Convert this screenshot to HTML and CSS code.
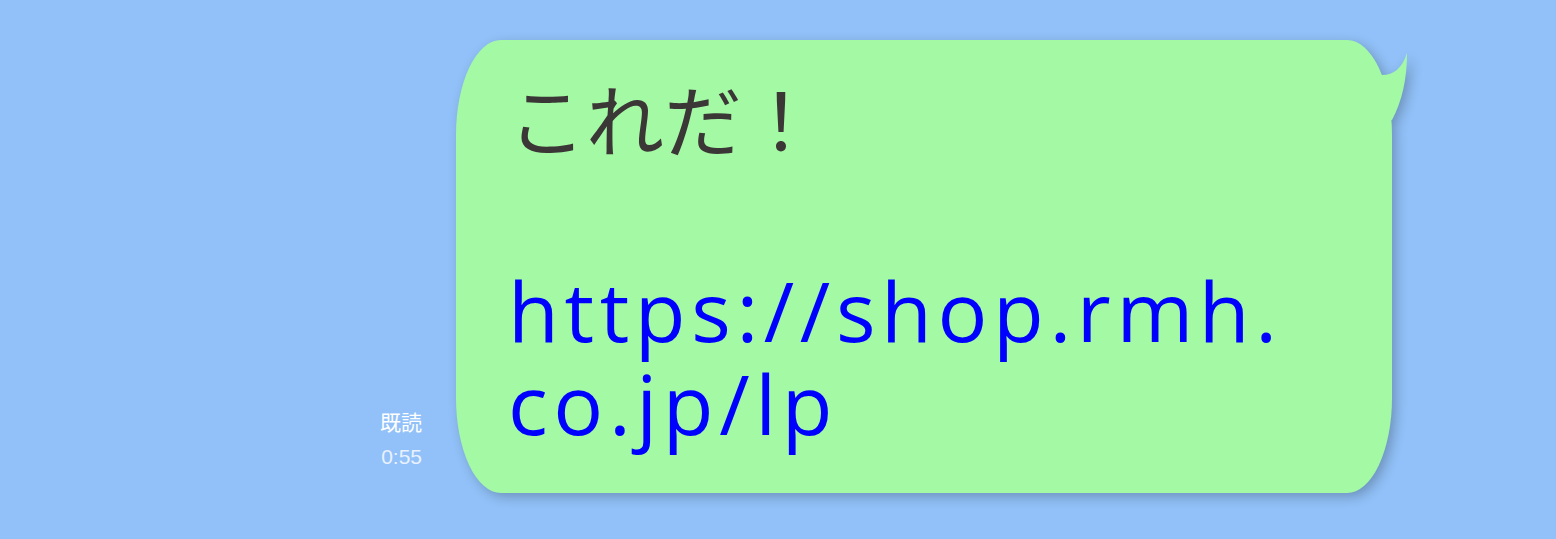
FILE: index.html
```html
<!DOCTYPE html>
<html lang="ja">
<head>
<meta charset="utf-8">
<title>chat</title>
<link rel="stylesheet" href="styles.css">
</head>
<body>
<div class="chat">
  <div class="row">
    <div class="meta">
      <div class="read">既読</div>
      <div class="time">0:55</div>
    </div>
    <div class="bubble-wrap">
      <div class="bubble">
        <p class="jp">これだ！</p>
        <p class="msg"><a class="link" href="#">https://shop.rmh.<br>co.jp/lp</a></p>
      </div>
      <svg class="tail" width="60" height="90" viewBox="0 0 60 90">
        <path d="M12 10 L32 35 Q52 36 59 13 Q59 52 44 80 L12 80 Z" fill="#a4f9a4"/>
      </svg>
    </div>
  </div>
</div>
</body>
</html>
```
FILE: styles.css
```css
html, body {
  margin: 0;
  padding: 0;
}
body {
  background: #91c1f8;
  width: 1556px;
  height: 539px;
  overflow: hidden;
  font-family: "Open Sans", "Noto Sans CJK JP", sans-serif;
}
.chat {
  padding: 40px 164px 0 0;
}
.row {
  display: flex;
  justify-content: flex-end;
  align-items: flex-end;
}
.meta {
  margin-right: 34px;
  padding-bottom: 22px;
  text-align: right;
}
.read {
  color: #ffffff;
  font-family: "Noto Sans CJK JP", sans-serif;
  font-size: 21px;
  line-height: 28px;
}
.time {
  color: #e9f1ff;
  font-family: "Liberation Sans", sans-serif;
  font-size: 21px;
  line-height: 28px;
  margin-top: 8px;
}
.bubble-wrap {
  position: relative;
  filter: drop-shadow(4px 4px 6px rgba(0, 0, 0, 0.24));
}
.bubble {
  width: 936px;
  box-sizing: border-box;
  background: #a4f9a4;
  border-radius: 45px / 95px;
  padding: 31px 40px 44px 52px;
}
.tail {
  position: absolute;
  top: 0;
  right: -16px;
}
.jp {
  margin: 0;
  color: #3c3737;
  font-family: "Noto Sans CJK JP", sans-serif;
  font-size: 78px;
  line-height: 93px;
  height: 93px;
}
.msg {
  margin: 99px 0 0;
  font-size: 83px;
  line-height: 93px;
  letter-spacing: 5.6px;
}
.link {
  color: #0000ff;
  text-decoration: none;
}
```
